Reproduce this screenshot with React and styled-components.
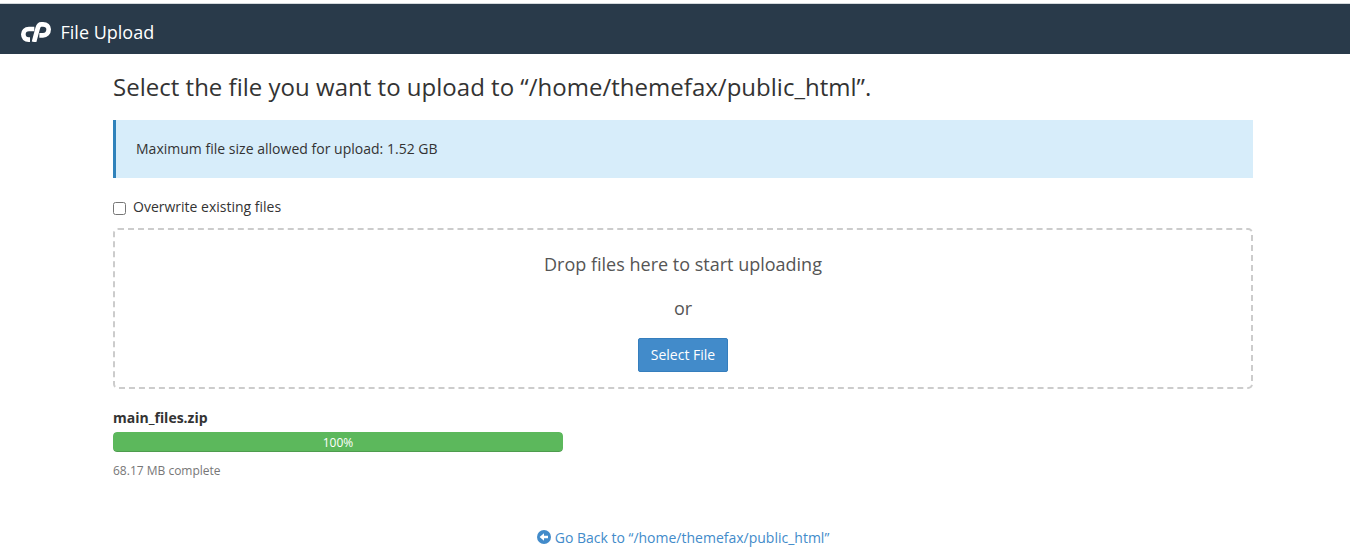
import React from "react";
import styled, { createGlobalStyle } from "styled-components";

const GlobalStyle = createGlobalStyle`
  *, *::before, *::after { box-sizing: border-box; }
  body {
    margin: 0;
    background: #fff;
    color: #333;
    font: 14px/20px "Open Sans", "Noto Sans", sans-serif;
    overflow: hidden;
  }
`;

const Page = styled.div`
  height: 555px;
  padding-top: 3px;
`;

const Header = styled.header`
  display: flex;
  align-items: center;
  gap: 9.5px;
  height: 51px;
  padding: 6px 21px 0;
  border-top: 1px solid #d3d9dc;
  background: #293a4a;
  color: #fff;
`;

const LogoMark = styled.svg`
  display: block;
  width: 30px;
  height: 20px;
  fill: none;
  stroke: #fff;
  stroke-width: 14;
  stroke-linejoin: round;
`;

const HeaderTitle = styled.span`
  font-size: 18px;
  line-height: 24px;
`;

const Content = styled.main`
  display: flex;
  flex-direction: column;
  width: 1140px;
  margin-left: 113px;
`;

const Heading = styled.h1`
  margin: 20px 0 0;
  font-size: 24px;
  font-weight: 400;
  line-height: 26px;
  letter-spacing: 0.015px;
  white-space: nowrap;
`;

const Callout = styled.div`
  height: 58px;
  margin-top: 20px;
  padding: 19px 20px;
  border-left: 3px solid #2f82bb;
  background: #d7edfa;
  letter-spacing: 0.015px;
`;

const Option = styled.label`
  display: flex;
  align-items: flex-start;
  gap: 7px;
  height: 20px;
  margin-top: 19px;
`;

const Checkbox = styled.input`
  width: 13px;
  height: 13px;
  margin: 5px 0 0;
`;

const DropZone = styled.section`
  display: flex;
  flex-direction: column;
  align-items: center;
  height: 161px;
  margin-top: 11px;
  padding-top: 22px;
  border: 2px dashed #ccc;
  border-radius: 5px;
  color: #555;
  font-size: 18px;
  line-height: 24px;
`;

const DropText = styled.p`
  margin: 0 0 20px;
`;

const SelectButton = styled.button`
  width: 90px;
  height: 34px;
  margin-top: -2px;
  padding: 0;
  border: 1px solid #357ebd;
  border-radius: 2px;
  background: #428bca;
  color: #fff;
  font: inherit;
  font-size: 14px;
  line-height: 20px;
`;

const Upload = styled.section`
  width: 450px;
  margin-top: 19px;
`;

const FileName = styled.div`
  font-weight: 700;
`;

const Track = styled.div`
  height: 20px;
  margin-top: 4px;
  border-radius: 4px;
  background: #f5f5f5;
  overflow: hidden;
`;

const Bar = styled.div`
  height: 100%;
  padding-top: 1px;
  border-radius: 4px;
  background: #5cb85c;
  box-shadow: inset 0 -1px 0 rgba(0, 0, 0, 0.15);
  color: #fff;
  font-size: 12px;
  text-align: center;
`;

const Status = styled.div`
  margin-top: 9px;
  color: #777;
  font-size: 12px;
`;

const BackLink = styled.a`
  display: flex;
  align-items: flex-start;
  align-self: center;
  gap: 4px;
  margin-top: 47px;
  color: #428bca;
`;

const BackIcon = styled.svg`
  width: 14px;
  height: 14px;
  margin-top: 2px;
`;

function Logo() {
  return (
    <LogoMark viewBox="0 0 90 60" aria-hidden="true">
      <path d="M40 21H24C13 21 7 28 7 37C7 47 13 53 23 53H27" />
      <path d="M39 60L50 19Q53 7 61 7H66C77 7 83 13 83 22C83 33 76 40 66 40H55" />
    </LogoMark>
  );
}

function ArrowCircle() {
  return (
    <BackIcon viewBox="0 0 14 14" aria-hidden="true">
      <circle cx="7" cy="7" r="7" fill="#428bca" />
      <path d="M2.6 7L7 3.3V5.8H11V8.2H7V10.7Z" fill="#fff" />
    </BackIcon>
  );
}

export default function App() {
  const percent = 100;
  return (
    <Page>
      <GlobalStyle />
      <Header>
        <Logo />
        <HeaderTitle>File Upload</HeaderTitle>
      </Header>
      <Content>
        <Heading>Select the file you want to upload to “/home/themefax/public_html”.</Heading>
        <Callout>Maximum file size allowed for upload: 1.52 GB</Callout>
        <Option>
          <Checkbox type="checkbox" />
          Overwrite existing files
        </Option>
        <DropZone>
          <DropText>Drop files here to start uploading</DropText>
          <DropText>or</DropText>
          <SelectButton type="button">Select File</SelectButton>
        </DropZone>
        <Upload>
          <FileName>main_files.zip</FileName>
          <Track>
            <Bar style={{ width: `${percent}%` }}>{percent}%</Bar>
          </Track>
          <Status>68.17 MB complete</Status>
        </Upload>
        <BackLink>
          <ArrowCircle />
          Go Back to “/home/themefax/public_html”
        </BackLink>
      </Content>
    </Page>
  );
}
